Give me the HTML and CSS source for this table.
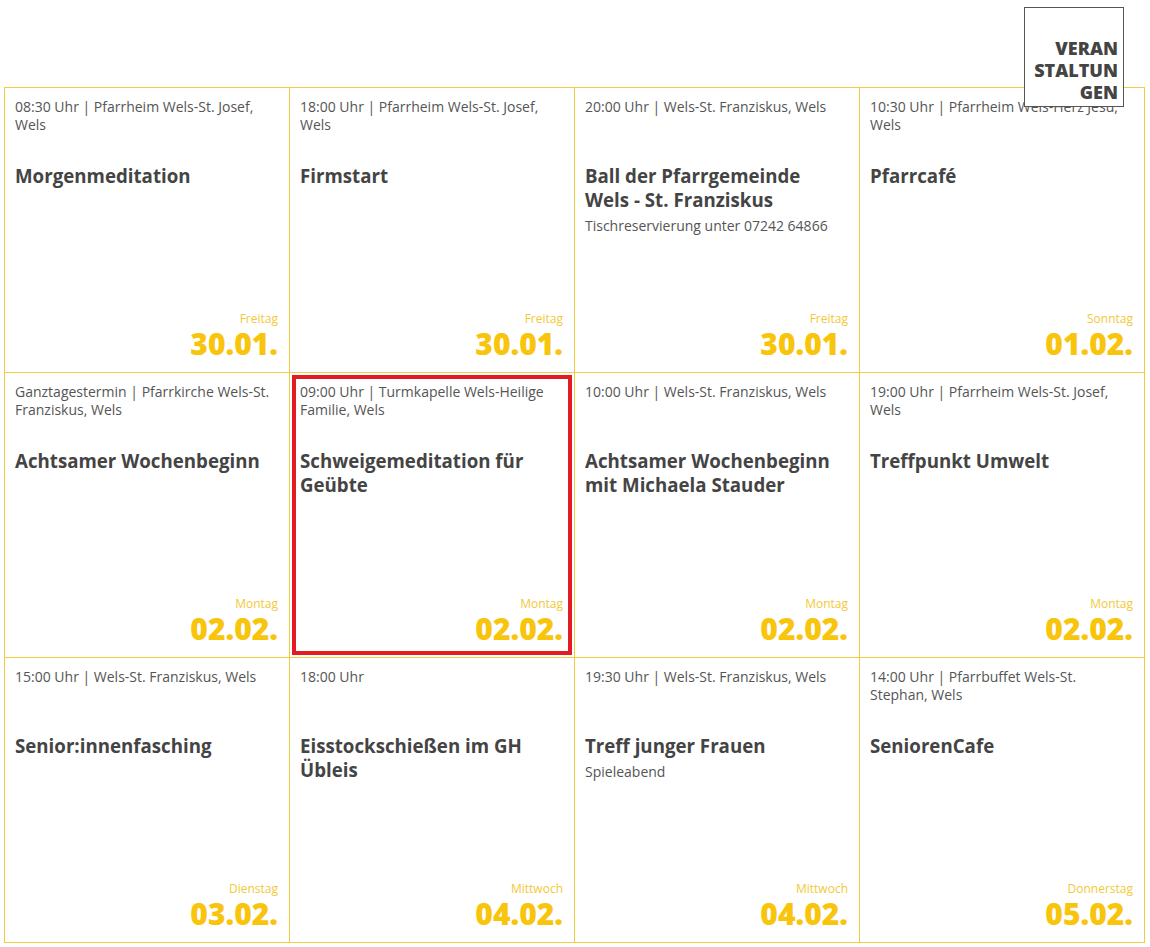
FILE: index.html
```html
<!DOCTYPE html>
<html lang="de">
<head>
<meta charset="utf-8">
<title>Veranstaltungen</title>
<link rel="stylesheet" href="styles.css">
</head>
<body>
<div class="page">
  <div class="badge"><span class="badge-text">VERAN&#8203;STALTUN&#8203;GEN</span></div>
  <div class="grid">
    <div class="cell">
      <div class="meta">08:30 Uhr | Pfarrheim Wels-St. Josef, Wels</div>
      <div class="title">Morgenmeditation</div>
      <div class="when"><div class="day">Freitag</div><div class="date">30.01.</div></div>
    </div>
    <div class="cell">
      <div class="meta">18:00 Uhr | Pfarrheim Wels-St. Josef, Wels</div>
      <div class="title">Firmstart</div>
      <div class="when"><div class="day">Freitag</div><div class="date">30.01.</div></div>
    </div>
    <div class="cell">
      <div class="meta">20:00 Uhr | Wels-St. Franziskus, Wels</div>
      <div class="title">Ball der Pfarrgemeinde Wels - St. Franziskus</div>
      <div class="desc">Tischreservierung unter 07242 64866</div>
      <div class="when"><div class="day">Freitag</div><div class="date">30.01.</div></div>
    </div>
    <div class="cell">
      <div class="meta">10:30 Uhr | Pfarrheim Wels-Herz Jesu, Wels</div>
      <div class="title">Pfarrcafé</div>
      <div class="when"><div class="day">Sonntag</div><div class="date">01.02.</div></div>
    </div>
    <div class="cell">
      <div class="meta">Ganztagestermin | Pfarrkirche Wels-St. Franziskus, Wels</div>
      <div class="title">Achtsamer Wochenbeginn</div>
      <div class="when"><div class="day">Montag</div><div class="date">02.02.</div></div>
    </div>
    <div class="cell cell-active">
      <div class="meta">09:00 Uhr | Turmkapelle Wels-Heilige Familie, Wels</div>
      <div class="title">Schweigemeditation für Geübte</div>
      <div class="when"><div class="day">Montag</div><div class="date">02.02.</div></div>
    </div>
    <div class="cell">
      <div class="meta">10:00 Uhr | Wels-St. Franziskus, Wels</div>
      <div class="title">Achtsamer Wochenbeginn mit Michaela Stauder</div>
      <div class="when"><div class="day">Montag</div><div class="date">02.02.</div></div>
    </div>
    <div class="cell">
      <div class="meta">19:00 Uhr | Pfarrheim Wels-St. Josef, Wels</div>
      <div class="title">Treffpunkt Umwelt</div>
      <div class="when"><div class="day">Montag</div><div class="date">02.02.</div></div>
    </div>
    <div class="cell">
      <div class="meta">15:00 Uhr | Wels-St. Franziskus, Wels</div>
      <div class="title">Senior:innenfasching</div>
      <div class="when"><div class="day">Dienstag</div><div class="date">03.02.</div></div>
    </div>
    <div class="cell">
      <div class="meta">18:00 Uhr</div>
      <div class="title">Eisstockschießen im GH Übleis</div>
      <div class="when"><div class="day">Mittwoch</div><div class="date">04.02.</div></div>
    </div>
    <div class="cell">
      <div class="meta">19:30 Uhr | Wels-St. Franziskus, Wels</div>
      <div class="title">Treff junger Frauen</div>
      <div class="desc">Spieleabend</div>
      <div class="when"><div class="day">Mittwoch</div><div class="date">04.02.</div></div>
    </div>
    <div class="cell">
      <div class="meta">14:00 Uhr | Pfarrbuffet Wels-St. Stephan, Wels</div>
      <div class="title">SeniorenCafe</div>
      <div class="when"><div class="day">Donnerstag</div><div class="date">05.02.</div></div>
    </div>
  </div>
</div>
</body>
</html>
```

FILE: styles.css
```css
html, body {
  margin: 0;
  padding: 0;
  background: #ffffff;
}

body {
  font-family: "Open Sans", "Liberation Sans", sans-serif;
  color: #555555;
}

.page {
  position: relative;
  width: 1150px;
  padding: 87px 0 0 4px;
  box-sizing: border-box;
}

.badge {
  position: absolute;
  top: 7px;
  left: 1024px;
  width: 100px;
  height: 100px;
  box-sizing: border-box;
  border: 1px solid #555555;
  background: #ffffff;
  z-index: 2;
  display: flex;
  align-items: flex-end;
  justify-content: flex-end;
  padding: 0 5px 3px 5px;
}

.badge-text {
  display: block;
  width: 100%;
  text-align: right;
  font-size: 18px;
  line-height: 22px;
  font-weight: 800;
  color: #444444;
}

.grid {
  display: grid;
  grid-template-columns: repeat(4, 284px);
  grid-auto-rows: 284px;
  gap: 1px;
  width: max-content;
  background: #f0cd40;
  border: 1px solid #f0cd40;
}

.cell {
  background: #ffffff;
  display: flex;
  flex-direction: column;
  padding: 10px 11px 11px 10px;
  box-sizing: border-box;
  min-width: 0;
}

.cell-active {
  outline: 4px solid #e31b23;
  outline-offset: -6px;
}

.meta {
  font-size: 14px;
  line-height: 18px;
  min-height: 36px;
  color: #555555;
}

.title {
  margin-top: 30px;
  padding-right: 10px;
  font-size: 18.7px;
  line-height: 24px;
  font-weight: 700;
  color: #444444;
}

.desc {
  margin-top: 5px;
  font-size: 14px;
  line-height: 18px;
  color: #555555;
}

.when {
  margin-top: auto;
  text-align: right;
}

.day {
  font-size: 12px;
  line-height: 16px;
  font-weight: 400;
  color: #f2c938;
}

.date {
  font-size: 30px;
  line-height: 34px;
  font-weight: 800;
  color: #f9c40c;
}
```
